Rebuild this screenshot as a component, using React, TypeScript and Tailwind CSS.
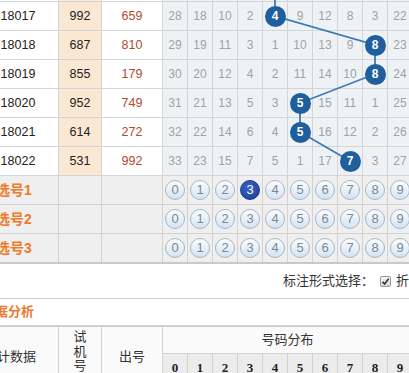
import React from "react";

type RowData = { id: string; a: string; b: string; vals: number[]; ball: number };

const rows: RowData[] = [
  { id: "18017", a: "992", b: "659", vals: [28, 18, 10, 2, 4, 9, 12, 8, 3, 22], ball: 4 },
  { id: "18018", a: "687", b: "810", vals: [29, 19, 11, 3, 1, 10, 13, 9, 8, 23], ball: 8 },
  { id: "18019", a: "855", b: "179", vals: [30, 20, 12, 4, 2, 11, 14, 10, 8, 24], ball: 8 },
  { id: "18020", a: "952", b: "749", vals: [31, 21, 13, 5, 3, 5, 15, 11, 1, 25], ball: 5 },
  { id: "18021", a: "614", b: "272", vals: [32, 22, 14, 6, 4, 5, 16, 12, 2, 26], ball: 5 },
  { id: "18022", a: "531", b: "992", vals: [33, 23, 15, 7, 5, 1, 17, 7, 3, 27], ball: 7 },
];

const digits = [0, 1, 2, 3, 4, 5, 6, 7, 8, 9];
const numFont = { fontFamily: '"Liberation Sans", Arial, sans-serif' };
const cjk = { fontFamily: '"Liberation Sans", "Noto Sans CJK SC", sans-serif' };

function DataRow({ r }: { r: RowData }) {
  return (
    <div className="flex h-[29px] border-b border-[#d2d6da]" style={numFont}>
      <div className="w-[81px] shrink-0 border-r border-[#d2d6da] bg-white flex items-center justify-center text-[12.5px] text-[#222]">
        {r.id}
      </div>
      <div className="w-[43px] shrink-0 border-r border-[#d2d6da] bg-[#fbe8d3] flex items-center justify-center text-[12.5px] text-[#222]">
        {r.a}
      </div>
      <div className="w-[61px] shrink-0 border-r border-[#d2d6da] bg-white flex items-center justify-center text-[12.5px] text-[#b24a2e]">
        {r.b}
      </div>
      {digits.map((d) => (
        <div
          key={d}
          className="w-[25px] shrink-0 border-r border-[#d2d6da] bg-[#eff2f5] flex items-center justify-center text-[12px] text-[#9ba3ab]"
        >
          {r.ball === d ? (
            <span className="relative z-10 w-[21px] h-[21px] rounded-full bg-[#1f5f9e] text-white font-bold text-[12px] flex items-center justify-center">
              {r.ball}
            </span>
          ) : (
            r.vals[d]
          )}
        </div>
      ))}
    </div>
  );
}

function SelRow({ label, sel, last }: { label: string; sel?: number; last?: boolean }) {
  return (
    <div className={`flex h-[29px] ${last ? "h-[30px] border-b-2 border-[#c9c9c9]" : "border-b border-[#d2d2d2]"}`}>
      <div
        className="w-[81px] shrink-0 border-r border-[#d2d2d2] bg-[#efefef] flex items-center justify-center pr-[8px] text-[14px] font-bold text-[#f07a2a]"
        style={cjk}
      >
        {label}
      </div>
      <div className="w-[43px] shrink-0 border-r border-[#d2d2d2] bg-[#efefef]" />
      <div className="w-[61px] shrink-0 border-r border-[#d2d2d2] bg-[#efefef]" />
      {digits.map((d) => (
        <div key={d} className="w-[25px] shrink-0 border-r border-[#d2d2d2] bg-[#efefef] flex items-center justify-center">
          {sel === d ? (
            <span
              className="w-[20px] h-[20px] rounded-full bg-[radial-gradient(circle_at_40%_35%,#3b62c4,#1a3d96)] border border-[#1a3d96] text-white text-[13px] flex items-center justify-center"
              style={numFont}
            >
              {d}
            </span>
          ) : (
            <span
              className="w-[20px] h-[20px] rounded-full bg-[linear-gradient(#fbfdff,#d3e3f3)] border border-[#a9b5c1] text-[#7d8894] text-[13px] flex items-center justify-center"
              style={numFont}
            >
              {d}
            </span>
          )}
        </div>
      ))}
    </div>
  );
}

export default function App() {
  const cx = (c: number) => 175 + 25 * c;
  const cy = (r: number) => 16 + 29 * r;
  const pts = rows.map((r, i) => `${cx(r.ball)},${cy(i)}`);
  const poly = [`${cx(4)},-10`, ...pts].join(" ");

  return (
    <div className="relative w-[409px] h-[373px] overflow-hidden bg-white">
      <div className="ml-[-22px] w-[460px]">
        {/* top partial row */}
        <div className="flex h-[2px] border-b border-[#d2d6da]">
          <div className="w-[81px] shrink-0 border-r border-[#d2d6da] bg-white" />
          <div className="w-[43px] shrink-0 border-r border-[#d2d6da] bg-[#fbe8d3]" />
          <div className="w-[61px] shrink-0 border-r border-[#d2d6da] bg-white" />
          {digits.map((d) => (
            <div key={d} className="w-[25px] shrink-0 border-r border-[#d2d6da] bg-[#eff2f5]" />
          ))}
        </div>
        {rows.map((r) => (
          <DataRow key={r.id} r={r} />
        ))}
        <SelRow label="选号1" sel={3} />
        <SelRow label="选号2" />
        <SelRow label="选号3" last />
      </div>

      {/* annotation row */}
      <div className="h-[35px] border-b border-[#cfcfcf] flex items-center pl-[283px] whitespace-nowrap text-[13px] text-[#333]" style={cjk}>
        <span>标注形式选择：</span>
        <span className="ml-[6px] w-[11px] h-[11px] rounded-[2px] border border-[#9a9a9a] bg-[linear-gradient(#f4f4f4,#d8d8d8)] flex items-center justify-center shrink-0">
          <svg width="9" height="9" viewBox="0 0 9 9">
            <path d="M1.5 4.8 L3.6 7 L7.6 1.8" stroke="#333" strokeWidth="1.6" fill="none" />
          </svg>
        </span>
        <span className="ml-[5px]">折线</span>
      </div>

      {/* section title */}
      <div className="h-[28px] border-b-2 border-[#cfcfcf] flex items-center">
        <span className="ml-[-18px] text-[13px] font-bold text-[#ee7a31] whitespace-nowrap" style={cjk}>
          数据分析
        </span>
      </div>

      {/* bottom table header */}
      <div className="ml-[-22px] w-[460px] flex text-[13px] text-[#333]" style={cjk}>
        <div className="w-[81px] shrink-0 border-r border-[#d2d2d2] bg-[#fafafa] h-[60px] flex items-center justify-center pr-[16px]">
          统计数据
        </div>
        <div className="w-[43px] shrink-0 border-r border-[#d2d2d2] bg-[#fafafa] h-[60px] flex flex-col items-center pt-[3px] leading-[14.5px]">
          <span>试</span>
          <span>机</span>
          <span>号</span>
        </div>
        <div className="w-[61px] shrink-0 border-r border-[#d2d2d2] bg-[#fafafa] h-[60px] flex items-center justify-center">
          出号
        </div>
        <div className="flex flex-col">
          <div className="h-[27px] w-[250px] border-b border-r border-[#d2d2d2] bg-[#fafafa] flex items-center justify-center">
            号码分布
          </div>
          <div className="flex h-[33px]">
            {digits.map((d) => (
              <div
                key={d}
                className="w-[25px] shrink-0 border-r border-[#d2d2d2] bg-[#ececec] flex items-start pt-[4px] justify-center font-bold text-[13px] text-[#222]"
                style={{ fontFamily: '"Liberation Serif", "DejaVu Serif", serif' }}
              >
                {d}
              </div>
            ))}
          </div>
        </div>
      </div>

      {/* trend line overlay */}
      <svg className="absolute top-0 left-0 pointer-events-none z-[5]" width="409" height="180">
        <polyline points={poly} fill="none" stroke="#3f7bb8" strokeWidth="1.8" />
      </svg>
    </div>
  );
}
